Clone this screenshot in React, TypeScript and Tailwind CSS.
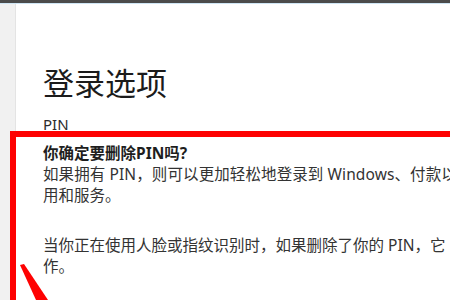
import React from 'react';

const font = { fontFamily: '"Noto Sans", "Noto Sans CJK SC", sans-serif' };

const App: React.FC = () => {
  return (
    <div className="relative w-[450px] h-[300px] overflow-hidden bg-white flex flex-col" style={font}>
      {/* window title strip */}
      <div className="h-[3px] bg-[#4b4b4b] shrink-0" />
      <div className="h-[1px] bg-[#cfe6f5] shrink-0" />

      <div className="flex flex-1 min-h-0">
        {/* nav pane edge */}
        <div className="w-[16px] shrink-0 bg-[#f1f1f1] border-r border-[#e4e4e4]" />

        <div className="flex-1 min-w-0 flex flex-col">
          <h1 className="pl-[27px] mt-[59px] text-[31px] leading-[40px] text-[#1b1b1b] font-normal whitespace-nowrap">
            登录选项
          </h1>
          <div className="pl-[27px] mt-[12px] text-[15px] leading-[18px] text-[#2b2b2b]">PIN</div>

          {/* red annotation frame */}
          <div className="ml-[-6px] mt-[-2px] flex-1 border-l-[6px] border-t-[6px] border-[#fe0202] pl-[27px] pt-[6px] text-[15.5px] leading-[21px] text-[#333333] whitespace-nowrap overflow-hidden">
            <div className="font-bold text-[#1e1e1e]">你确定要删除PIN吗?</div>
            <div className="tracking-[0.1px]">如果拥有 PIN，则可以更加轻松地登录到 Windows、付款以</div>
            <div>用和服务。</div>
            <div className="mt-[29px]">当你正在使用人脸或指纹识别时，如果删除了你的 PIN，它</div>
            <div>作。</div>
          </div>
        </div>
      </div>

      {/* red arrow stroke */}
      <svg className="absolute left-0 top-0" width="450" height="300" viewBox="0 0 450 300">
        <polygon points="20,265 24,264 48,300 36,300" fill="#fe0202" />
      </svg>
    </div>
  );
};

export default App;
